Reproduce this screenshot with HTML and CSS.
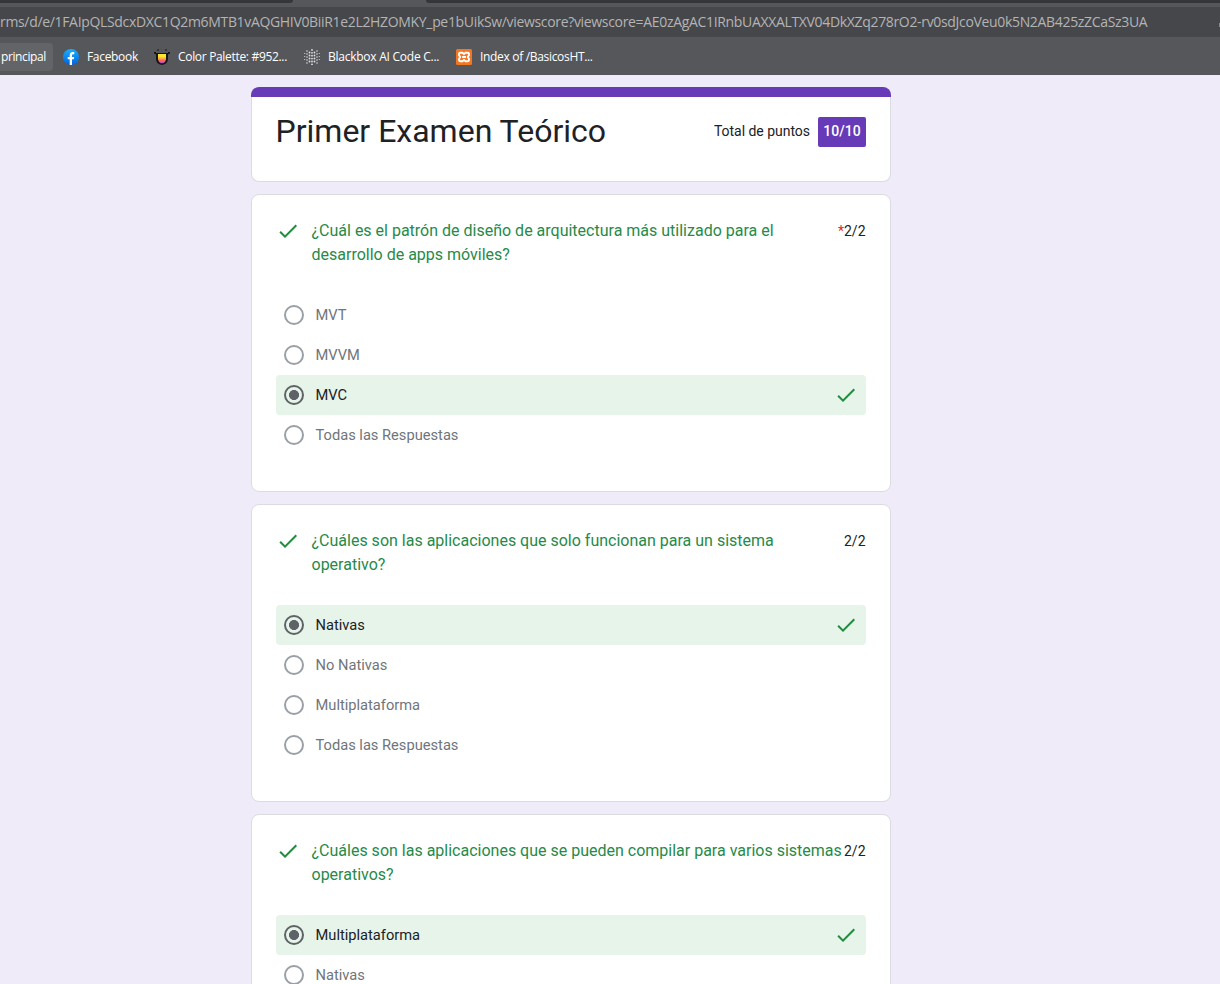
FILE: index.html
```html
<!DOCTYPE html>
<html lang="es">
<head>
<meta charset="utf-8">
<title>Primer Examen Teórico</title>
<link rel="stylesheet" href="styles.css">
</head>
<body>
<svg class="defs" aria-hidden="true">
  <symbol id="check" viewBox="0 0 24 24"><path fill="#1e8e3e" d="M9 16.17L4.83 12l-1.42 1.41L9 19 21 7l-1.41-1.41z"/></symbol>
</svg>
<header class="browser">
  <div class="tabs"><span class="tabs-left"></span><span class="tabs-active"></span><span class="tabs-right"></span></div>
  <div class="address"><span class="url">rms/d/e/1FAIpQLSdcxDXC1Q2m6MTB1vAQGHIV0BiiR1e2L2HZOMKY_pe1bUikSw/viewscore?viewscore=AE0zAgAC1IRnbUAXXALTXV04DkXZq278rO2-rv0sdJcoVeu0k5N2AB425zZCaSz3UA</span><span class="address-mark"></span></div>
  <nav class="bookmarks">
    <span class="bookmark bookmark-on"><span class="label l-principal">principal</span></span>
    <span class="bookmark b-facebook">
      <svg width="16" height="16" viewBox="0 0 16 16"><defs><linearGradient id="fb" x2="0" y2="1"><stop stop-color="#19afff"/><stop offset="1" stop-color="#0062e0"/></linearGradient></defs><circle cx="8" cy="8" r="8" fill="url(#fb)"/><path fill="#fff" d="M6.7 15.9v-5.6h-2V8h2V6.4c0-2.1 1.2-3.3 3-3.3.6 0 1.3.1 1.600.2v2h-1c-1 0-1.300.5-1.300 1.200V8h2.200l-.4 2.300H9v5.600a8 8 0 0 1-2.300 0z"/></svg>
      <span class="label">Facebook</span>
    </span>
    <span class="bookmark b-palette">
      <svg width="16" height="16" viewBox="0 0 16 16"><path fill="#161616" d="M0 3h2v1h12V3h2v1.500L14 5.500V10q0 5-6 6-6-1-6-6V5.500L0 4.500zM3 .5h2v1H3zM11 .5h2v1h-2z"/><path fill="#ffe52e" d="M4 5h8v5H4z"/><path fill="#ffad42" d="M4 8.500h8V11H4z"/><path fill="#ff6262" d="M4 10.500h8l-1 2.500H5z"/><path fill="#b552bd" d="M5 12.700h6q-1 1.500-3 1.500t-3-1.500z"/></svg>
      <span class="label l-palette">Color Palette: #952...</span>
    </span>
    <span class="bookmark b-blackbox">
      <svg width="16" height="16" viewBox="0 0 16 16" fill="none" stroke="#e0e0e1" stroke-linecap="round"><path stroke-width="1.100" stroke-dasharray="0 3" d="M.7 4.500v7M15.300 4.500v7"/><path stroke-width="1.500" stroke-dasharray="0 3" d="M3 2v13M13 2v13"/><path stroke-width="1.800" stroke-dasharray="0 3" d="M5.500 3.500v10M10.500 3.500v10"/><path stroke-width="1.800" stroke-dasharray="0 2.900" d="M8 .9v15"/></svg>
      <span class="label l-blackbox">Blackbox AI Code C...</span>
    </span>
    <span class="bookmark b-xampp">
      <svg width="16" height="16" viewBox="0 0 16 16"><rect width="16" height="16" rx="1.500" fill="#f37623"/><path fill="none" stroke="#fff" stroke-width="1.900" stroke-linejoin="round" stroke-linecap="round" d="M8 5.200L6.700 3.800H4.200Q3 3.800 3 5v1l1.200 2L3 10v1q0 1.200 1.200 1.200h2.500L8 10.800l1.300 1.400h2.500q1.200 0 1.200-1.200v-1l-1.200-2L13 6V5q0-1.200-1.200-1.200H9.300zM6.800 8h2.400"/></svg>
      <span class="label l-xampp">Index of /BasicosHT...</span>
    </span>
  </nav>
</header>
<main class="form">
  <section class="card title-card">
    <h1 class="title">Primer Examen Teórico</h1>
    <div class="total"><span class="total-label">Total de puntos</span><span class="total-score">10/10</span></div>
  </section>

  <section class="card">
    <div class="question">
      <svg class="tick"><use href="#check"/></svg>
      <h2 class="prompt">¿Cuál es el patrón de diseño de arquitectura más utilizado para el<br>desarrollo de apps móviles?</h2>
      <span class="points"><span class="required">*</span>2/2</span>
    </div>
    <ul class="options">
      <li class="option"><span class="radio"></span><span>MVT</span></li>
      <li class="option"><span class="radio"></span><span>MVVM</span></li>
      <li class="option chosen"><span class="radio"></span><span>MVC</span><svg class="tick"><use href="#check"/></svg></li>
      <li class="option"><span class="radio"></span><span>Todas las Respuestas</span></li>
    </ul>
  </section>

  <section class="card">
    <div class="question">
      <svg class="tick"><use href="#check"/></svg>
      <h2 class="prompt">¿Cuáles son las aplicaciones que solo funcionan para un sistema<br>operativo?</h2>
      <span class="points">2/2</span>
    </div>
    <ul class="options">
      <li class="option chosen"><span class="radio"></span><span>Nativas</span><svg class="tick"><use href="#check"/></svg></li>
      <li class="option"><span class="radio"></span><span>No Nativas</span></li>
      <li class="option"><span class="radio"></span><span>Multiplataforma</span></li>
      <li class="option"><span class="radio"></span><span>Todas las Respuestas</span></li>
    </ul>
  </section>

  <section class="card">
    <div class="question">
      <svg class="tick"><use href="#check"/></svg>
      <h2 class="prompt">¿Cuáles son las aplicaciones que se pueden compilar para varios sistemas<br>operativos?</h2>
      <span class="points">2/2</span>
    </div>
    <ul class="options">
      <li class="option chosen"><span class="radio"></span><span>Multiplataforma</span><svg class="tick"><use href="#check"/></svg></li>
      <li class="option"><span class="radio"></span><span>Nativas</span></li>
    </ul>
  </section>
</main>
</body>
</html>
```
FILE: styles.css
```css
* { box-sizing: border-box; }
body {
  display: flex;
  flex-direction: column;
  margin: 0;
  height: 984px;
  overflow: hidden;
  background: #f0ebf8;
  font-family: Roboto, "Liberation Sans", sans-serif;
  color: #202124;
}
.defs { display: none; }

/* Browser chrome */
.browser {
  flex: none;
  height: 75px;
  background: #56575b;
  font-family: "Open Sans", "Noto Sans", sans-serif;
}
.tabs { display: flex; height: 7px; }
.tabs-left, .tabs-right { height: 3px; background: #35363a; }
.tabs-left { width: 293px; border-bottom-right-radius: 3px; }
.tabs-active { width: 133px; }
.tabs-right { flex: 1; border-bottom-left-radius: 3px; }
.address {
  display: flex;
  align-items: center;
  justify-content: space-between;
  height: 30px;
  background: #46474a;
}
.url {
  font-size: 14px;
  line-height: 30px;
  letter-spacing: -0.33px;
  white-space: nowrap;
  color: #b4b4b5;
}
.address-mark {
  width: 1px;
  height: 4px;
  margin-top: 6px;
  background: #8a8b8d;
}
.bookmarks {
  display: flex;
  align-items: center;
  height: 38px;
  padding-top: 1px;
}
.bookmark {
  display: flex;
  align-items: center;
  gap: 8px;
  height: 28px;
  font-size: 12px;
  white-space: nowrap;
  color: #fff;
}
.bookmark svg { flex: none; }
.bookmark-on { width: 53px; padding-left: 1px; border-radius: 0 4px 4px 0; background: #636468; }
.b-facebook { width: 91px; margin-left: 10px; }
.b-palette { width: 150px; }
.b-blackbox { width: 152px; }
.label { letter-spacing: -0.32px; }
.l-principal { letter-spacing: -0.4px; }
.l-blackbox { letter-spacing: -0.25px; }

/* Form */
.form {
  flex: 1;
  min-height: 0;
  overflow: hidden;
  display: flex;
  flex-direction: column;
  gap: 12px;
  width: 640px;
  margin: 12px 0 0 251px;
}
.card {
  flex: none;
  height: 298px;
  padding: 24px;
  border: 1px solid #dadce0;
  border-radius: 8px;
  background: #fff;
}
.title-card {
  display: flex;
  justify-content: space-between;
  height: 95px;
  border-color: transparent;
  border-top: 0;
  background:
    linear-gradient(#673ab7, #673ab7) 0 0 / 100% 10px no-repeat border-box,
    linear-gradient(#fff, #fff) padding-box,
    linear-gradient(#dadce0, #dadce0) border-box;
}
.title { margin: 0 0 0 -0.5px; font-size: 32px; line-height: 40px; font-weight: 400; }
.total { display: flex; gap: 8px; margin-top: 6px; font-size: 14px; line-height: 29px; }
.total-label { letter-spacing: -0.03px; }
.total-score {
  width: 48px;
  height: 30px;
  border-radius: 2px;
  background: #673ab7;
  color: #fff;
  font-weight: 500;
  text-align: center;
}
.question { display: flex; height: 48px; white-space: nowrap; }
.tick { flex: none; width: 24px; height: 24px; }
.question .tick { margin-right: 11.5px; }
.prompt { flex: 1; min-width: 0; margin: 0; font-size: 16px; line-height: 24px; font-weight: 400; color: #268a48; }
.points { margin-right: 0.5px; font-size: 14px; line-height: 25px; }
.required { color: #d93025; }
.options { margin: 28px 0 0; padding: 0; list-style: none; }
.option {
  display: flex;
  align-items: center;
  height: 40px;
  padding: 0 8px;
  border-radius: 4px;
  font-size: 14.67px;
  color: #70757a;
}
.option .tick { margin-left: auto; }
.radio {
  flex: none;
  width: 20px;
  height: 20px;
  margin-right: 11.5px;
  border: 2px solid #9aa0a6;
  border-radius: 50%;
}
.chosen { background: #e6f4ea; color: #202124; }
.chosen .radio { border-color: #5f6368; background: radial-gradient(circle, #5f6368 4.700px, transparent 5.300px); }
```
